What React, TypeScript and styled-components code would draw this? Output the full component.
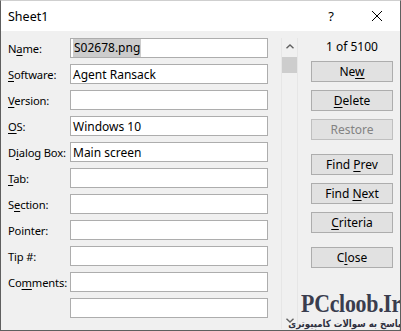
import React from "react";
import styled, { createGlobalStyle } from "styled-components";

const Global = createGlobalStyle`
  html, body { margin: 0; padding: 0; background: #ffffff; }
  body { font-family: "Noto Sans", "Liberation Sans", sans-serif; font-size: 12px; color: #000; }
  * { box-sizing: border-box; }
`;

const Window = styled.div`
  position: relative;
  width: 401px;
  height: 331px;
  border: 1px solid #5f5f5f;
  border-top-color: #cfcfcf;
  display: flex;
  flex-direction: column;
  overflow: hidden;
  background: #f0f0f0;
`;

const TitleBar = styled.div`
  height: 30px;
  background: #ffffff;
  display: flex;
  align-items: center;
  padding-left: 7px;
  flex-shrink: 0;
`;

const Title = styled.div`
  flex: 1;
  font-size: 12.5px;
  color: #000;
`;

const TitleButton = styled.div`
  width: 46px;
  height: 30px;
  display: flex;
  align-items: center;
  justify-content: center;
  font-size: 13px;
`;

const Body = styled.div`
  flex: 1;
  display: flex;
  padding: 7px 0 0 7px;
`;

const Form = styled.div`
  display: grid;
  grid-template-columns: 62px 198px;
  grid-auto-rows: 20px;
  row-gap: 6px;
  align-content: start;
`;

const Label = styled.label`
  display: flex;
  align-items: center;
  white-space: nowrap;
  font-size: 11.2px;
  letter-spacing: -0.15px;
`;

const Key = styled.span`
  text-decoration: underline;
  text-underline-offset: 2px;
  text-decoration-thickness: 1px;
`;

const Field = styled.div`
  grid-column: 2;
  background: #ffffff;
  border: 1px solid #adadad;
  display: flex;
  align-items: center;
  padding-left: 2px;
  font-size: 12px;
  white-space: nowrap;
  overflow: hidden;
`;

const Selected = styled.span`
  background: #cccccc;
  padding: 1px;
  line-height: 16px;
`;

const Scroll = styled.div`
  width: 17px;
  margin-left: 13px;
  margin-bottom: 1px;
  display: flex;
  flex-direction: column;
  background: #f0f0f0;
  border-left: 1px solid #e6e6e6;
  border-right: 1px solid #e6e6e6;
`;

const Arrow = styled.div`
  height: 17px;
  display: flex;
  align-items: center;
  justify-content: center;
  flex-shrink: 0;
`;

const Track = styled.div`
  flex: 1;
  padding-top: 2px;
`;

const Thumb = styled.div`
  height: 16px;
  background: #cdcdcd;
`;

const Buttons = styled.div`
  width: 82px;
  margin-left: 13px;
  display: flex;
  flex-direction: column;
`;

const Counter = styled.div`
  height: 17px;
  display: flex;
  align-items: center;
  justify-content: center;
  margin-bottom: 6px;
  font-size: 12px;
`;

const Button = styled.div<{ $disabled?: boolean; $gapTop?: number }>`
  height: 21px;
  margin-top: ${(p) => p.$gapTop ?? 8}px;
  background: #e1e1e1;
  border: 1px solid ${(p) => (p.$disabled ? "#bfbfbf" : "#adadad")};
  color: ${(p) => (p.$disabled ? "#838383" : "#000")};
  display: flex;
  align-items: center;
  justify-content: center;
  font-size: 12px;
  white-space: pre;
`;

const Watermark = styled.div`
  position: absolute;
  right: -1px;
  bottom: 0;
  display: flex;
  flex-direction: column;
  align-items: flex-end;
  pointer-events: none;
`;

const WmTitle = styled.div`
  font-family: "Liberation Serif", "DejaVu Serif", serif;
  font-weight: bold;
  font-size: 26px;
  line-height: 29px;
  height: 29px;
  color: #3a3d4e;
  letter-spacing: -0.3px;
  transform: scaleX(0.84);
  transform-origin: right center;
`;

const WmSub = styled.div`
  font-family: "DejaVu Sans", "Noto Sans", sans-serif;
  font-weight: bold;
  font-size: 10px;
  line-height: 12px;
  height: 12px;
  color: #2f3140;
  direction: rtl;
  transform: scaleX(0.86);
  transform-origin: right center;
`;

const Chevron = ({ down }: { down?: boolean }) => (
  <svg width="8" height="5" viewBox="0 0 8 5">
    <path
      d={down ? "M0.5 0.8 L4 4 L7.5 0.8" : "M0.5 4.2 L4 1 L7.5 4.2"}
      fill="none"
      stroke="#606060"
      strokeWidth="1.4"
    />
  </svg>
);

const fields: { label: React.ReactNode; value?: React.ReactNode }[] = [
  { label: <span>N<Key>a</Key>me:</span>, value: <Selected>S02678.png</Selected> },
  { label: <span><Key>S</Key>oftware:</span>, value: "Agent Ransack" },
  { label: <span><Key>V</Key>ersion:</span> },
  { label: <span><Key>O</Key>S:</span>, value: "Windows 10" },
  { label: <span>D<Key>i</Key>alog Box:</span>, value: "Main screen" },
  { label: <span><Key>T</Key>ab:</span> },
  { label: <span>S<Key>e</Key>ction:</span> },
  { label: <span>Pointer:</span> },
  { label: <span>Tip #:</span> },
  { label: <span>Co<Key>m</Key>ments:</span> },
  { label: null },
];

export default function App() {
  return (
    <>
      <Global />
      <Window>
        <TitleBar>
          <Title>Sheet1</Title>
          <TitleButton>?</TitleButton>
          <TitleButton>
            <svg width="12" height="12" viewBox="0 0 12 12">
              <path d="M1 1 L11 11 M11 1 L1 11" stroke="#000" strokeWidth="1" />
            </svg>
          </TitleButton>
        </TitleBar>
        <Body>
          <Form>
            {fields.map((f, i) => (
              <React.Fragment key={i}>
                {f.label ? <Label>{f.label}</Label> : <span />}
                <Field>{f.value}</Field>
              </React.Fragment>
            ))}
          </Form>
          <Scroll>
            <Arrow>
              <Chevron />
            </Arrow>
            <Track>
              <Thumb />
            </Track>
            <Arrow>
              <Chevron down />
            </Arrow>
          </Scroll>
          <Buttons>
            <Counter>1 of 5100</Counter>
            <Button $gapTop={0}><span>Ne<Key>w</Key></span></Button>
            <Button><span><Key>D</Key>elete</span></Button>
            <Button $disabled><span>Restore</span></Button>
            <Button $gapTop={14}><span>Find <Key>P</Key>rev</span></Button>
            <Button><span>Find <Key>N</Key>ext</span></Button>
            <Button><span><Key>C</Key>riteria</span></Button>
            <Button $gapTop={14}><span>C<Key>l</Key>ose</span></Button>
          </Buttons>
        </Body>
        <Watermark>
          <WmTitle>PCcloob.Ir</WmTitle>
          <WmSub>پاسخ به سوالات کامپیوتری</WmSub>
        </Watermark>
      </Window>
    </>
  );
}
